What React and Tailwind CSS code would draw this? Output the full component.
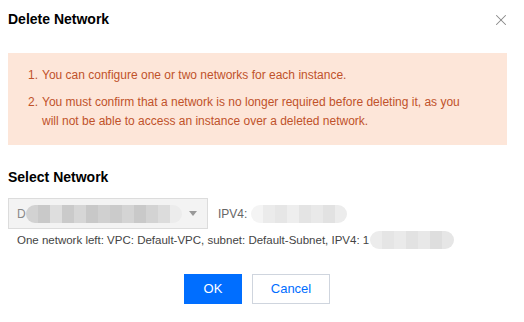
import { X } from 'lucide-react'

const FONT = { fontFamily: '"Segoe UI", "Liberation Sans", Arial, sans-serif' }

// stand-in for the pixelated / blurred masked values in the screenshot
function Masked({ shades, className = '' }) {
  return (
    <span className={`inline-flex h-[18px] overflow-hidden rounded-[9px] blur-[0.6px] ${className}`}>
      {shades.map((c, i) => (
        <span key={i} className="h-full w-[12px] shrink-0" style={{ backgroundColor: c }} />
      ))}
    </span>
  )
}

const SELECT_SHADES = ['#d2d2d2', '#c9c9c9', '#dedede', '#cacaca', '#d6d6d6', '#c8c8c8', '#d0d0d0', '#cbcbcb', '#d4d4d4', '#c9c9c9', '#d3d3d3', '#dcdcdc', '#ececec']
const IP_SHADES = ['#f4f4f4', '#ebebeb', '#e6e6e6', '#eeeeee', '#e4e4e4', '#e9e9e9', '#e2e2e2', '#ececec']
const LEFT_SHADES = ['#ececec', '#e5e5e5', '#eaeaea', '#e2e2e2', '#e8e8e8', '#dedede', '#e6e6e6']

export default function App() {
  return (
    <div className="w-[524px] h-[322px] bg-white text-[#000] overflow-hidden" style={FONT}>
      {/* Header */}
      <div className="flex items-center justify-between pl-2 pr-[14px] pt-[9px] h-[28px]">
        <h1 className="text-[14px] font-bold leading-[18px]">Delete Network</h1>
        <X size={18} strokeWidth={1.4} className="text-[#888] mt-[2px]" />
      </div>

      {/* Notice */}
      <div className="ml-2 mr-[17px] mt-[25px] bg-[#fde6d9] pl-[20px] pr-[30px] pt-[13px] pb-[14px] text-[12px] leading-[19px] text-[#c0522a]">
        <ol className="flex flex-col gap-2">
          <li className="flex">
            <span className="w-[14px] shrink-0">1.</span>
            <span>You can configure one or two networks for each instance.</span>
          </li>
          <li className="flex">
            <span className="w-[14px] shrink-0">2.</span>
            <span>
              You must confirm that a network is no longer required before deleting it, as you will not be able to access
              an instance over a deleted network.
            </span>
          </li>
        </ol>
      </div>

      {/* Select network */}
      <div className="px-2 pt-[23px]">
        <h2 className="text-[14px] font-bold leading-[18px]">Select Network</h2>
        <div className="mt-[12px] flex items-center">
          <div className="flex h-[31px] w-[200px] items-center border border-[#dcdcdc] bg-[#f3f3f3] pl-[8px] pr-[10px]">
            <span className="text-[12px] text-[#888]">D</span>
            <Masked shades={SELECT_SHADES} />
            <svg width="8" height="5" viewBox="0 0 8 5" className="ml-auto">
              <path d="M0 0h8L4 5z" fill="#999" />
            </svg>
          </div>
          <span className="ml-[10px] text-[12px] text-[#666]">IPV4:</span>
          <Masked shades={IP_SHADES} className="ml-[4px]" />
        </div>
        <div className="mt-[2px] flex items-center pl-[9px] text-[11.5px] leading-[16px] text-[#444]">
          <span>One network left: VPC: Default-VPC, subnet: Default-Subnet, IPV4: 1</span>
          <Masked shades={LEFT_SHADES} className="ml-[1px] h-[14px]" />
        </div>
      </div>

      {/* Footer */}
      <div className="mt-[25px] flex justify-center gap-[10px] pr-[10px]">
        <button className="h-[30px] w-[58px] bg-[#006eff] text-[13px] text-white">OK</button>
        <button className="h-[30px] w-[78px] border border-[#cfd5de] bg-white text-[13px] text-[#006eff]">Cancel</button>
      </div>
    </div>
  )
}
